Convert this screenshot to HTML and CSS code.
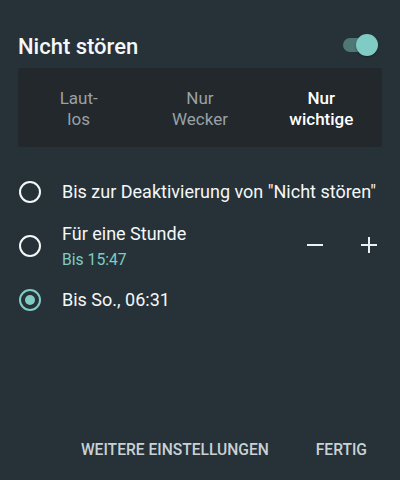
FILE: index.html
```html
<!DOCTYPE html>
<html lang="de">
<head>
  <meta charset="UTF-8">
  <meta name="viewport" content="width=device-width, initial-scale=1">
  <title>Nicht stören</title>
  <link rel="stylesheet" href="styles.css">
</head>
<body>
  <div class="dialog">
    <header class="head">
      <h1>Nicht stören</h1>
      <div class="switch on">
        <span class="track"></span>
        <span class="thumb"></span>
      </div>
    </header>

    <section class="modes">
      <div class="mode">Laut-<br>los</div>
      <div class="mode">Nur<br>Wecker</div>
      <div class="mode active">Nur<br>wichtige</div>
    </section>

    <section class="options">
      <div class="option">
        <span class="radio"></span>
        <div class="label">Bis zur Deaktivierung von "Nicht stören"</div>
      </div>
      <div class="option">
        <span class="radio"></span>
        <div class="label">
          Für eine Stunde
          <div class="sub">Bis 15:47</div>
        </div>
        <div class="stepper">
          <button class="step" aria-label="weniger">
            <svg width="16" height="16" viewBox="0 0 16 16"><path d="M0 8h16" stroke="#eceff1" stroke-width="2"/></svg>
          </button>
          <button class="step" aria-label="mehr">
            <svg width="16" height="16" viewBox="0 0 16 16"><path d="M0 8h16M8 0v16" stroke="#eceff1" stroke-width="2"/></svg>
          </button>
        </div>
      </div>
      <div class="option">
        <span class="radio checked"></span>
        <div class="label">Bis So., 06:31</div>
      </div>
    </section>

    <footer class="actions">
      <button class="text-btn">Weitere Einstellungen</button>
      <button class="text-btn">Fertig</button>
    </footer>
  </div>
</body>
</html>
```

FILE: styles.css
```css
:root {
  --bg: #263238;
  --panel: #22282c;
  --accent: #80cbc4;
  --text: #f5f7f8;
  --muted: #9aa1a5;
  --btn: #c9d1d5;
}
* { margin: 0; padding: 0; box-sizing: border-box; }
body {
  background: var(--bg); color: var(--text);
  font-family: Roboto, 'Noto Sans', sans-serif;
}
.dialog { height: 100vh; display: flex; flex-direction: column; }

.head {
  display: flex; justify-content: space-between; align-items: flex-start;
  padding: 35px 22px 9px 18px;
}
h1 { font-size: 22px; line-height: 24px; font-weight: 500; }
.switch { position: relative; width: 35px; height: 24px; margin-top: -2px; }
.switch .track {
  position: absolute; left: 0; top: 5px;
  width: 30px; height: 14px; border-radius: 7px;
  background: rgba(128,203,196,0.45);
}
.switch .thumb {
  position: absolute; right: 0; top: 1px;
  width: 22px; height: 22px; border-radius: 50%;
  background: var(--accent);
  box-shadow: 0 1px 2px rgba(0,0,0,0.35);
}

.modes {
  margin: 0 18px; height: 79px; padding-top: 2px;
  display: grid; grid-template-columns: repeat(3, 1fr);
  background: var(--panel); border-radius: 3px;
}
.mode {
  display: flex; align-items: center; justify-content: center; text-align: center;
  font-size: 17px; line-height: 21px; color: var(--muted);
}
.mode.active { color: #fff; font-weight: 500; }

.options { display: flex; flex-direction: column; gap: 18px; margin-top: 33px; }
.option { display: flex; align-items: center; padding-left: 19px; }
.radio {
  width: 22px; height: 22px; border-radius: 50%; flex: none;
  border: 2px solid var(--text); margin-right: 21px;
  display: flex; align-items: center; justify-content: center;
}
.radio.checked { border-color: var(--accent); }
.radio.checked::after {
  content: ""; width: 10px; height: 10px; border-radius: 50%; background: var(--accent);
}
.label { flex: 1; font-size: 18px; line-height: 24px; white-space: nowrap; }
.sub { margin-top: 4px; font-size: 15.7px; line-height: 20px; color: var(--accent); }
.stepper { display: flex; gap: 14px; padding-right: 11px; margin-top: -3px; }
.step {
  width: 40px; height: 40px; background: none; border: none;
  display: flex; align-items: center; justify-content: center;
}

.actions {
  margin-top: auto; padding: 0 33px 20px 0;
  display: flex; justify-content: flex-end; gap: 47px;
}
.text-btn {
  background: none; border: none; color: var(--btn);
  font-family: inherit; font-size: 15.6px; line-height: 20px; font-weight: 500;
  text-transform: uppercase;
}
```
